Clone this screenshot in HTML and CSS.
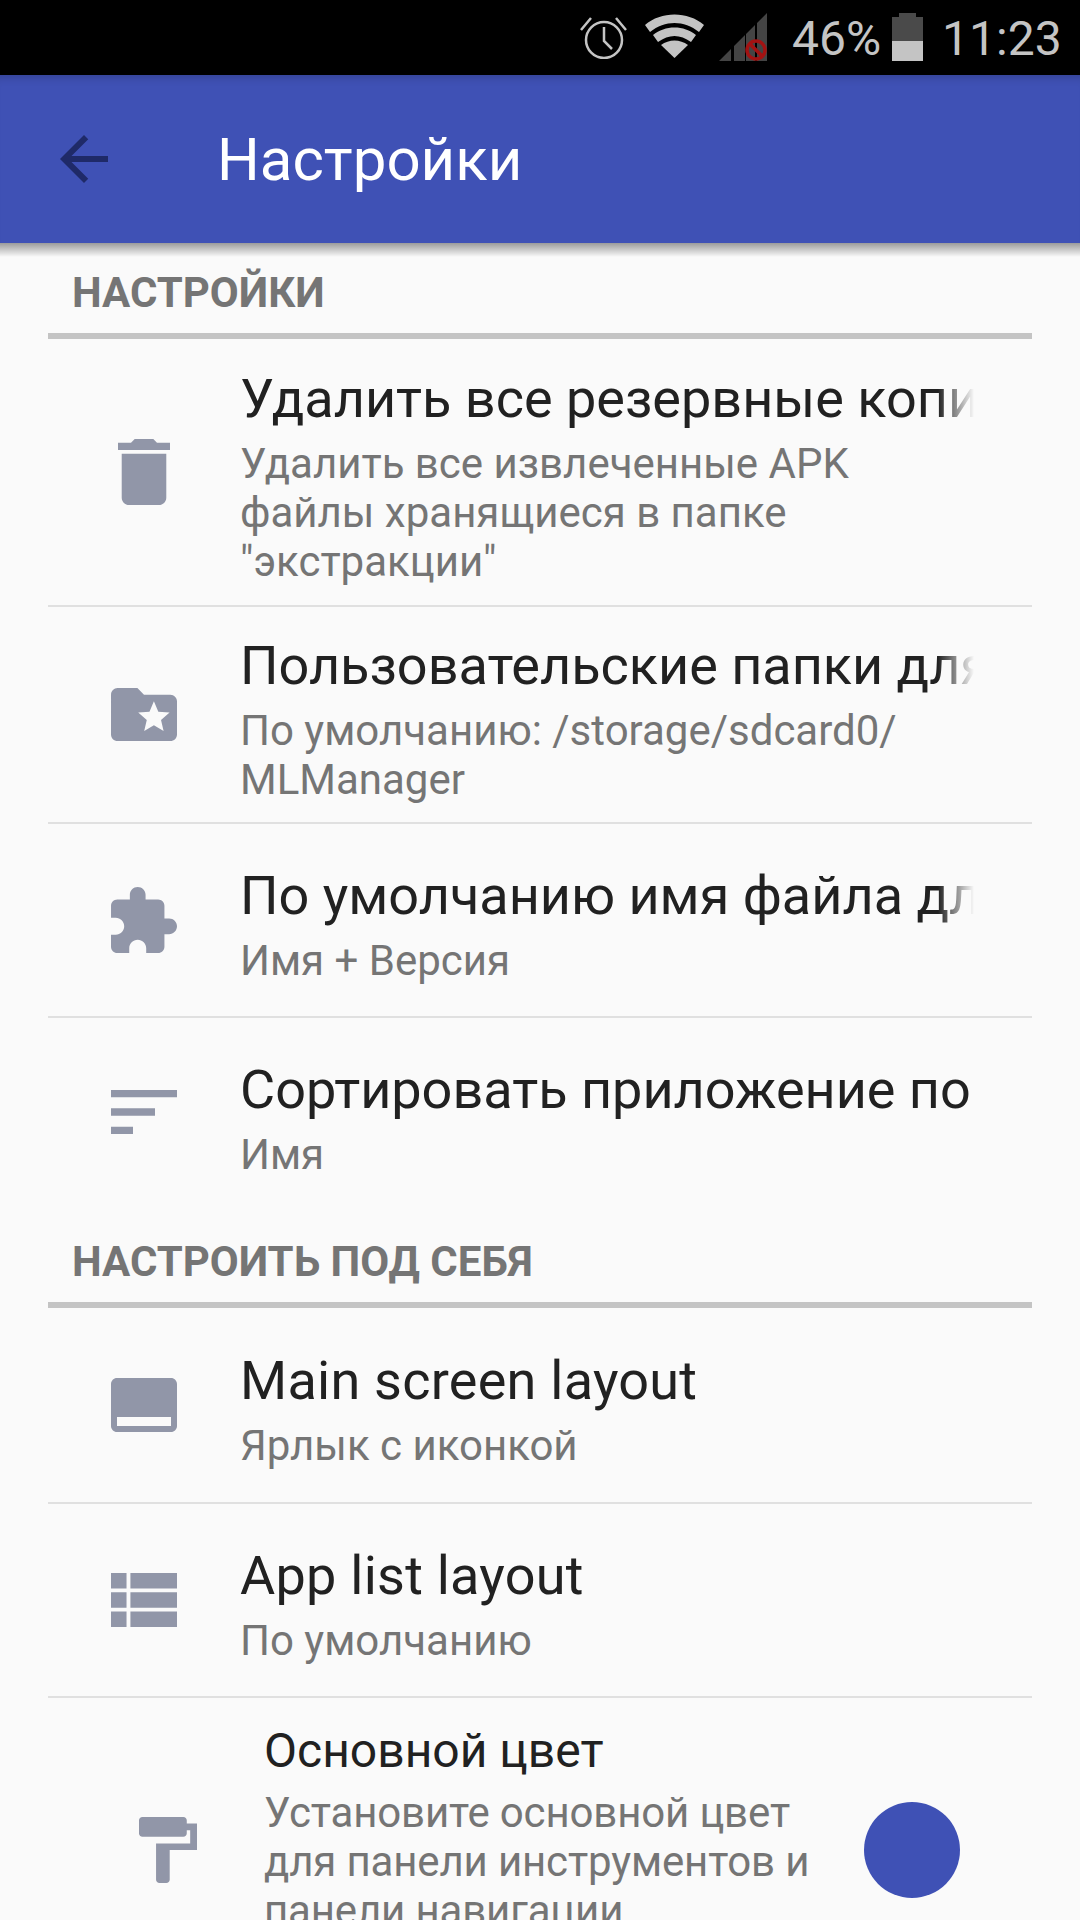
FILE: index.html
```html
<!DOCTYPE html>
<html lang="ru">
<head>
    <meta charset="UTF-8">
    <meta name="viewport" content="width=device-width, initial-scale=1.0">
    <title>Настройки</title>
    <link rel="stylesheet" href="styles.css">
</head>
<body>
    <div class="status-bar">
        <svg class="st-alarm" width="47" height="43" viewBox="0 0 47 43">
            <circle cx="24" cy="24" r="18" fill="none" stroke="#c4c4c4" stroke-width="2.5"/>
            <path d="M24 11v14l8 8" fill="none" stroke="#c4c4c4" stroke-width="2.5"/>
            <path d="M1 14 11 2M46 14 36 2" fill="none" stroke="#c4c4c4" stroke-width="2.5"/>
        </svg>
        <svg class="st-wifi" width="59" height="44" viewBox="0 0 59 44">
            <path d="M0 11C16-3 43-3 59 11l-5 7C39 6 20 6 5 18z" fill="#c4c4c4"/>
            <path d="M8 21C20 11 39 11 51 21l-5 7C35 20 24 20 13 28z" fill="#c4c4c4"/>
            <path d="M16 31c8-6 19-6 27 0L29.500 44z" fill="#c4c4c4"/>
        </svg>
        <svg class="st-signal" width="48" height="48" viewBox="0 0 48 48">
            <path d="M0 48 12 36v12zM15 48V33l11-11v26zM27 48V21l9-9v36zM38 48V10l10-10v48z" fill="#444"/>
            <circle cx="37" cy="37" r="9" fill="none" stroke="#a31212" stroke-width="3.500"/>
            <path d="M31 31 43 43" stroke="#a31212" stroke-width="3.500"/>
        </svg>
        <span class="st-text st-percent">46%</span>
        <div class="st-battery"><div class="st-battery-level"></div></div>
        <span class="st-text">11:23</span>
    </div>

    <div class="app-bar">
        <svg class="back-icon" width="72" height="72" viewBox="0 0 24 24">
            <path d="M20 11H7.830l5.590-5.590L12 4l-8 8 8 8 1.410-1.410L7.830 13H20v-2z"/>
        </svg>
        <div class="app-title">Настройки</div>
    </div>

    <div class="list">
        <div class="section-title">НАСТРОЙКИ</div>

        <div class="row row-first">
            <div class="row-icon">
                <svg width="52" height="66" viewBox="5 3 14 18" preserveAspectRatio="none">
                    <path d="M6 19c0 1.100.9 2 2 2h8c1.100 0 2-.9 2-2V7H6v12zM19 4h-3.500l-1-1h-5l-1 1H5v2h14V4z"/>
                </svg>
            </div>
            <div class="row-text">
                <div class="row-title fade">Удалить все резервные копии</div>
                <div class="row-sub">Удалить все извлеченные APK<br>файлы хранящиеся в папке<br>"экстракции"</div>
            </div>
        </div>

        <div class="row row-second">
            <div class="row-icon">
                <svg width="66" height="53" viewBox="2 4 20 16" preserveAspectRatio="none">
                    <path d="M20 6h-8l-2-2H4c-1.100 0-1.990.9-1.990 2L2 18c0 1.100.9 2 2 2h16c1.100 0 2-.9 2-2V8c0-1.100-.9-2-2-2zm-2.060 11L15 15.280 12.060 17l.78-3.330-2.590-2.240 3.410-.29L15 8l1.340 3.140 3.410.29-2.590 2.240.78 3.330z"/>
                </svg>
            </div>
            <div class="row-text">
                <div class="row-title fade">Пользовательские папки для экстракции</div>
                <div class="row-sub">По умолчанию: /storage/sdcard0/<br>MLManager</div>
            </div>
        </div>

        <div class="row row-short">
            <div class="row-icon">
                <svg width="66" height="66" viewBox="2 1 21 21" preserveAspectRatio="none">
                    <path d="M20.500 11H19V7c0-1.100-.9-2-2-2h-4V3.500C13 2.120 11.880 1 10.500 1S8 2.120 8 3.500V5H4c-1.100 0-1.990.9-1.990 2v3.800H3.500c1.490 0 2.700 1.210 2.700 2.700s-1.210 2.700-2.700 2.700H2V20c0 1.100.9 2 2 2h3.800v-1.500c0-1.490 1.210-2.700 2.700-2.700 1.490 0 2.700 1.210 2.700 2.700V22H17c1.100 0 2-.9 2-2v-4h1.500c1.380 0 2.500-1.120 2.500-2.500S21.880 11 20.500 11z"/>
                </svg>
            </div>
            <div class="row-text">
                <div class="row-title fade">По умолчанию имя файла для APK</div>
                <div class="row-sub">Имя + Версия</div>
            </div>
        </div>

        <div class="row row-short row-last">
            <div class="row-icon">
                <svg width="66" height="44" viewBox="3 6 18 12" preserveAspectRatio="none">
                    <path d="M3 18h6v-2H3v2zM3 6v2h18V6H3zm0 7h12v-2H3v2z"/>
                </svg>
            </div>
            <div class="row-text">
                <div class="row-title">Сортировать приложение по</div>
                <div class="row-sub">Имя</div>
            </div>
        </div>

        <div class="section-title">НАСТРОИТЬ ПОД СЕБЯ</div>

        <div class="row row-short row-main">
            <div class="row-icon">
                <svg width="66" height="54" viewBox="1 3 22 18" preserveAspectRatio="none">
                    <path d="M21 3H3c-1.100 0-2 .9-2 2v14c0 1.100.9 2 2 2h18c1.100 0 2-.9 2-2V5c0-1.100-.9-2-2-2zm0 16H3v-3h18v3z"/>
                </svg>
            </div>
            <div class="row-text">
                <div class="row-title latin">Main screen layout</div>
                <div class="row-sub">Ярлык с иконкой</div>
            </div>
        </div>

        <div class="row row-short">
            <div class="row-icon">
                <svg width="66" height="54" viewBox="4 5 17 14" preserveAspectRatio="none">
                    <path d="M4 14h4v-4H4v4zm0 5h4v-4H4v4zM4 9h4V5H4v4zm5 5h12v-4H9v4zm0 5h12v-4H9v4zM9 5v4h12V5H9z"/>
                </svg>
            </div>
            <div class="row-text">
                <div class="row-title latin">App list layout</div>
                <div class="row-sub">По умолчанию</div>
            </div>
        </div>

        <div class="row row-color">
            <div class="row-icon">
                <svg width="58" height="66" viewBox="4 2 17 20" preserveAspectRatio="none">
                    <path d="M18 4V3c0-.55-.45-1-1-1H5c-.55 0-1 .45-1 1v4c0 .55.45 1 1 1h12c.55 0 1-.45 1-1V6h1v4H9v11c0 .55.45 1 1 1h2c.55 0 1-.45 1-1v-9h8V4h-3z"/>
                </svg>
            </div>
            <div class="row-text">
                <div class="color-title">Основной цвет</div>
                <div class="row-sub color-sub">Установите основной цвет<br>для панели инструментов и<br>панели навигации</div>
            </div>
            <div class="color-dot"></div>
        </div>
    </div>
</body>
</html>
```
FILE: styles.css
```css
html, body {
    margin: 0;
    padding: 0;
}
body {
    width: 1080px;
    height: 1920px;
    overflow: hidden;
    font-family: Roboto, 'Noto Sans', sans-serif;
    background-color: #FAFAFA;
}

/* status bar */
.status-bar {
    height: 75px;
    background-color: #000;
    display: flex;
    align-items: center;
    padding-left: 580px;
    box-sizing: border-box;
}
.status-bar svg {
    flex: none;
}
.st-alarm {
    margin-top: -1px;
}
.st-wifi {
    margin: -3px 0 0 18px;
}
.st-signal {
    margin: -1px 0 0 15px;
}
.st-text {
    font-size: 48px;
    color: #C4C4C4;
    line-height: 75px;
    margin-top: 2px;
}
.st-percent {
    margin-left: 25px;
}
.st-battery {
    width: 31px;
    height: 44px;
    margin: 2px 19px 0 11px;
    background-color: #4A4A4A;
    display: flex;
    align-items: flex-end;
    position: relative;
}
.st-battery::before {
    content: '';
    position: absolute;
    top: -4px;
    left: 7px;
    width: 17px;
    height: 4px;
    background-color: #4A4A4A;
}
.st-battery-level {
    width: 100%;
    height: 20px;
    background-color: #C4C4C4;
}

/* app bar */
.app-bar {
    position: relative;
    height: 168px;
    background-color: #3F51B5;
    box-shadow: inset 0 10px 10px -8px rgba(0, 0, 0, 0.2);
    display: flex;
    align-items: center;
    padding-left: 48px;
}
.app-bar::after {
    content: '';
    position: absolute;
    left: 0;
    right: 0;
    top: 100%;
    height: 14px;
    background: linear-gradient(to bottom, rgba(0, 0, 0, 0.38), rgba(0, 0, 0, 0));
}
.back-icon {
    fill: #1F2A68;
}
.app-title {
    font-size: 60px;
    color: #fff;
    margin-left: 97px;
}

/* list */
.list {
    padding: 0 48px;
}
.section-title {
    height: 96px;
    padding: 21px 0 0 24px;
    box-sizing: border-box;
    border-bottom: 6px solid #C4C4C4;
    font-size: 42px;
    font-weight: bold;
    color: #757575;
    line-height: 58px;
}
.row {
    display: flex;
    align-items: center;
    border-bottom: 2px solid #E0E0E0;
    box-sizing: border-box;
    padding-left: 63px;
}
.row-first {
    height: 268px;
}
.row-second {
    height: 217px;
}
.row-short {
    height: 194px;
}
.row-main {
    height: 196px;
}
.row-last {
    border-bottom: none;
}
.row-last .row-icon {
    margin-top: -6px;
}
.row-last .row-text {
    margin-top: 6px;
}
.row-color {
    border-bottom: none;
    height: 304px;
    padding-left: 87px;
}
.row-icon {
    width: 66px;
    flex: none;
    display: flex;
    justify-content: center;
}
.row-icon svg {
    fill: #9196A8;
}
.row-text {
    margin-left: 63px;
    margin-top: 8px;
    width: 734px;
    overflow: hidden;
}
.row-title {
    font-size: 54px;
    color: #212121;
    line-height: 64px;
    white-space: nowrap;
    overflow: hidden;
    margin-bottom: 8px;
}
.latin {
    letter-spacing: 0.25px;
}
.fade {
    -webkit-mask-image: linear-gradient(to right, #000 calc(100% - 36px), transparent 100%);
    mask-image: linear-gradient(to right, #000 calc(100% - 36px), transparent 100%);
}
.row-sub {
    font-size: 42px;
    color: #757575;
    line-height: 49px;
}
.color-sub {
    letter-spacing: -0.15px;
}
.row-color .row-text {
    align-self: flex-start;
    margin: 23px 0 0 63px;
    width: 590px;
}
.color-title {
    font-size: 48px;
    color: #212121;
    line-height: 60px;
    margin-bottom: 7px;
}
.color-dot {
    width: 96px;
    height: 96px;
    border-radius: 50%;
    background-color: #3F51B5;
    flex: none;
    margin-left: 10px;
}
```
